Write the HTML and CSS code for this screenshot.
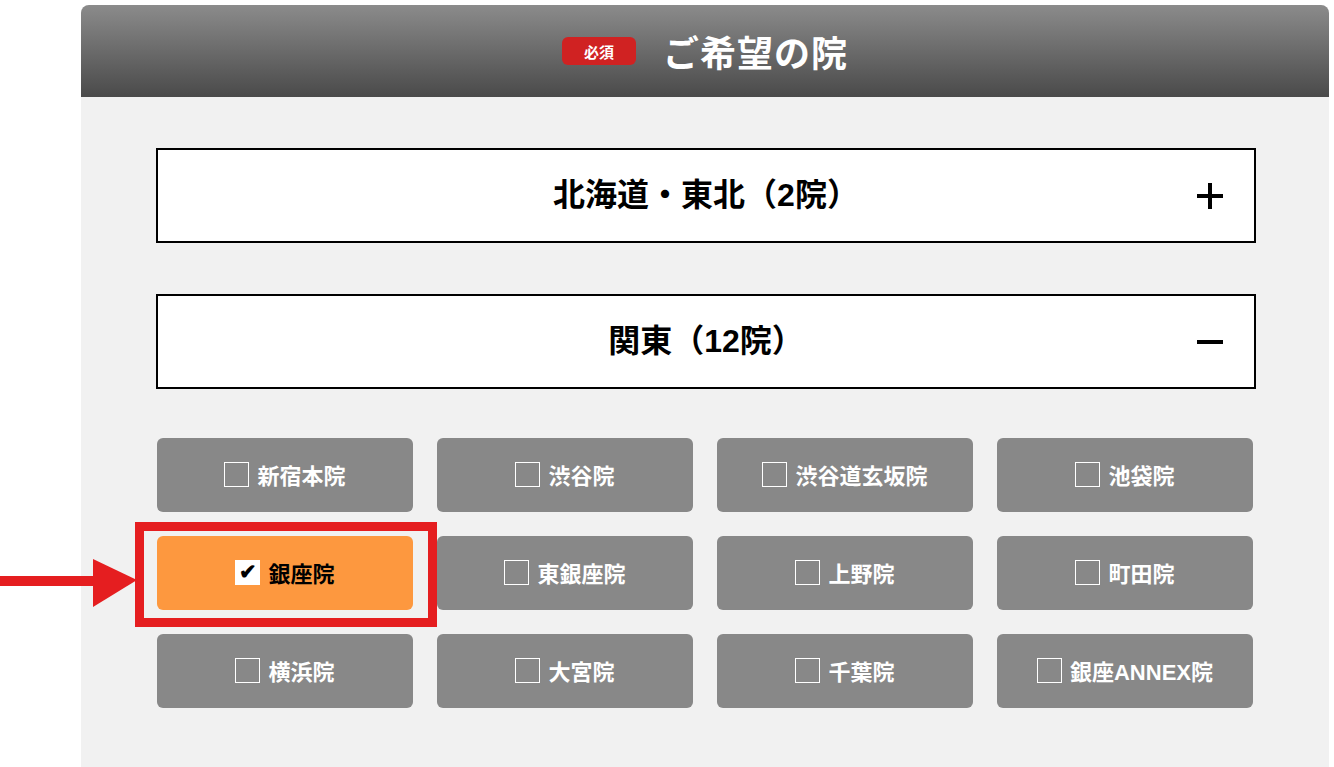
FILE: index.html
```html
<!DOCTYPE html>
<html lang="ja">
<head>
    <meta charset="UTF-8">
    <meta name="viewport" content="width=device-width, initial-scale=1.0">
    <title>ご希望の院</title>
    <link rel="stylesheet" href="styles.css">
</head>
<body>

    <div class="panel">
        <!-- 見出し -->
        <div class="panel-head">
            <span class="badge">必須</span>
            <h2>ご希望の院</h2>
        </div>

        <div class="panel-body">
            <div class="area">
                <span class="area-name">北海道・東北（2院）</span>
                <span class="toggle plus"></span>
            </div>

            <div class="area">
                <span class="area-name">関東（12院）</span>
                <span class="toggle minus"></span>
            </div>

            <!-- 関東の院 -->
            <div class="clinics">
                <label class="clinic"><span class="box"></span>新宿本院</label>
                <label class="clinic"><span class="box"></span>渋谷院</label>
                <label class="clinic"><span class="box"></span>渋谷道玄坂院</label>
                <label class="clinic"><span class="box"></span>池袋院</label>
                <label class="clinic selected">
                    <span class="box">✔</span>銀座院
                    <span class="mark"></span>
                    <svg class="arrow" width="140" height="52" viewBox="0 0 140 52">
                        <rect x="0" y="19" width="96" height="10" fill="#e51e20"/>
                        <polygon points="93,2 137,23 93,50" fill="#e51e20"/>
                    </svg>
                </label>
                <label class="clinic"><span class="box"></span>東銀座院</label>
                <label class="clinic"><span class="box"></span>上野院</label>
                <label class="clinic"><span class="box"></span>町田院</label>
                <label class="clinic"><span class="box"></span>横浜院</label>
                <label class="clinic"><span class="box"></span>大宮院</label>
                <label class="clinic"><span class="box"></span>千葉院</label>
                <label class="clinic"><span class="box"></span>銀座ANNEX院</label>
            </div>
        </div>
    </div>

</body>
</html>
```

FILE: styles.css
```css
body { margin: 0; font-family: "Liberation Sans", "Noto Sans CJK JP", sans-serif; background: #fff; }
.panel { margin: 5px 5px 0 81px; background: #f1f1f1; border-radius: 8px 8px 0 0; min-height: 762px; }
.panel-head { height: 92px; background: linear-gradient(#8b8b8b, #4a4a4a); border-radius: 8px 8px 0 0; display: flex; align-items: center; justify-content: center; gap: 27px; }
.panel-head h2 { margin: 0; color: #fff; font-size: 36px; font-weight: 700; letter-spacing: 1px; }
.badge { background: #d02222; color: #fff; font-size: 15px; font-weight: 700; width: 74px; height: 28px; border-radius: 6px; display: flex; align-items: center; justify-content: center; }
.panel-body { padding: 51px 73px 60px 75px; }
.area { position: relative; height: 91px; border: 2px solid #000; background: #fff; display: flex; align-items: center; justify-content: center; margin-bottom: 51px; }
.area-name { font-size: 32px; font-weight: 700; color: #000; margin-bottom: 8px; }
.toggle { position: absolute; right: 31px; top: 50%; width: 26px; height: 26px; margin-top: -13px; }
.toggle::before, .plus::after { content: ""; position: absolute; background: #000; left: 0; right: 0; top: 11px; height: 4px; }
.plus::after { left: 11px; width: 4px; top: 0; bottom: 0; height: auto; }
.clinics { display: grid; grid-template-columns: repeat(4, 256px); gap: 24px; margin: -2px 0 0 1px; }
.clinic { position: relative; height: 74px; box-sizing: border-box; padding-bottom: 3px; background: #888; border-radius: 6px; color: #fff; font-size: 22px; font-weight: 700; display: flex; align-items: center; justify-content: center; }
.box { width: 23px; height: 23px; border: 1px solid #fff; margin: 1px 8px 0 0; display: flex; align-items: center; justify-content: center; font-size: 21px; color: #000; }
.selected { background: #fd983f; color: #000; }
.selected .box { background: #fff; }
.mark { position: absolute; left: -22px; top: -14px; width: 284px; height: 87px; border: 9px solid #e51e20; }
.arrow { position: absolute; left: -157px; top: 21px; }
```
